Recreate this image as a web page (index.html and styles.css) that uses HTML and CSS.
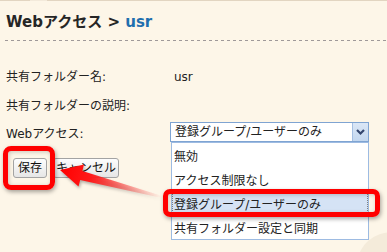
FILE: index.html
```html
<!DOCTYPE html>
<html lang="ja">
<head>
<meta charset="utf-8">
<title>Webアクセス</title>
<link rel="stylesheet" href="styles.css">
</head>
<body>
<div class="page">
  <div class="topbar"></div>
  <h1 class="title">Webアクセス <span class="gt">&gt;</span> <span class="share">usr</span></h1>
  <div class="rule"></div>
  <div class="form">
    <div class="label">共有フォルダー名:</div>
    <div class="value">usr</div>
    <div class="label">共有フォルダーの説明:</div>
    <div class="value"></div>
    <div class="label label-web">Webアクセス:</div>
    <div class="field">
      <div class="select">
        <span class="sel-text">登録グループ/ユーザーのみ</span>
        <span class="sel-btn"><svg width="15" height="18" viewBox="0 0 15 18"><path d="M4 7 L7.5 10.5 L11 7" fill="none" stroke="#34466e" stroke-width="2.2"/></svg></span>
      </div>
      <ul class="options">
        <li class="option">無効</li>
        <li class="option">アクセス制限なし</li>
        <li class="option option-active">登録グループ/ユーザーのみ</li>
        <li class="option">共有フォルダー設定と同期</li>
      </ul>
    </div>
  </div>
  <div class="buttons">
    <button class="btn btn-save">保存</button>
    <button class="btn btn-cancel">キャンセル</button>
  </div>
  <div class="curl"></div>
  <svg class="arrow" width="387" height="252" viewBox="0 0 387 252">
    <defs>
      <linearGradient id="fade" gradientUnits="userSpaceOnUse" x1="60" y1="170" x2="162" y2="197">
        <stop offset="0" stop-color="#ff0000" stop-opacity="1"/>
        <stop offset="0.3" stop-color="#ff1a1a" stop-opacity="1"/>
        <stop offset="1" stop-color="#ff4040" stop-opacity="0"/>
      </linearGradient>
    </defs>
    <polygon class="arrow-shape" points="60,170 84,164.5 82.4,171 162.3,196 161.7,198 80.2,180 78.5,186.5" fill="url(#fade)"/>
  </svg>
  <div class="mark mark-save"></div>
  <div class="mark mark-option"></div>
</div>
</body>
</html>
```
FILE: styles.css
```css
html, body {
  margin: 0;
  padding: 0;
}

body {
  background: #fdf6e8;
  font-family: "DejaVu Sans", "Noto Sans CJK JP", sans-serif;
  font-size: 12px;
  color: #222;
}

.page {
  position: relative;
  width: 387px;
  height: 252px;
  overflow: hidden;
}

.topbar {
  height: 1px;
  background: linear-gradient(to right, #e2d5c1 30px, #f3eadb 30px, #f3eadb 47px, #e2d5c1 47px);
  margin-bottom: 1px;
}

.title {
  margin: 0;
  padding: 10px 0 0 6px;
  font-size: 15px;
  line-height: 20px;
  font-weight: bold;
  color: #262626;
}

.share {
  color: #1f6fae;
}

.rule {
  margin: 8px 0 0 5px;
  height: 1px;
  background: repeating-linear-gradient(to right, #9f9999 0, #9f9999 3px, transparent 3px, transparent 6px);
}

.form {
  margin-top: 21px;
  padding-left: 6px;
  display: grid;
  grid-template-columns: 164px 199px;
  grid-template-rows: 29px 29px 24px;
  align-items: center;
}

.label {
  line-height: 16px;
  white-space: nowrap;
}

.label-web {
  margin-top: 4px;
}

.value {
  padding-left: 4px;
  line-height: 16px;
}

.field {
  position: relative;
}

.select {
  display: flex;
  height: 18px;
  border: 1px solid #7fa4d2;
  background: #fff;
}

.sel-text {
  flex: 1;
  padding-left: 4px;
  line-height: 18px;
  white-space: nowrap;
}

.sel-btn {
  width: 15px;
  height: 18px;
  border-left: 1px solid #a4bfe2;
  background: linear-gradient(#dbe7f6, #c3d7ef);
}

.sel-btn svg {
  display: block;
}

.options {
  position: absolute;
  top: 20px;
  left: 1px;
  width: 196px;
  margin: 0;
  padding: 0;
  list-style: none;
  background: #fff;
  border: 1px solid #9dbbe2;
}

.option {
  height: 20px;
  padding: 4px 0 0 2px;
  line-height: 20px;
  white-space: nowrap;
}

.option-active {
  background: #d5e3f5;
  outline: 1px dotted #808080;
  outline-offset: -1px;
}

.buttons {
  display: flex;
  gap: 6px;
  margin-top: 14px;
  padding-left: 13px;
}

.btn {
  height: 20px;
  margin: 0;
  border: 1px solid #a3a3a3;
  border-radius: 3px;
  background: linear-gradient(#fdfdfd, #e6e6e6);
  font-family: "DejaVu Sans", "Noto Sans CJK JP", sans-serif;
  font-size: 12px;
  line-height: 18px;
  color: #111;
  padding: 0;
}

.btn-save {
  width: 34px;
}

.btn-cancel {
  width: 66px;
}

.curl {
  position: absolute;
  left: 358px;
  top: 232px;
  width: 70px;
  height: 60px;
  border-radius: 50%;
  background: #f4ebda;
}

.arrow {
  position: absolute;
  left: 0;
  top: 0;
  pointer-events: none;
}

.arrow-shape {
  filter: drop-shadow(1px 2px 1.5px rgba(0, 0, 0, 0.3));
}

.mark {
  position: absolute;
  border: 5px solid #ff0000;
  box-shadow: 1px 2px 4px rgba(0, 0, 0, 0.35), inset 1px 1px 4px rgba(0, 0, 0, 0.2);
  pointer-events: none;
}

.mark-save {
  left: 3px;
  top: 146px;
  width: 42px;
  height: 34px;
  border-radius: 8px;
}

.mark-option {
  left: 163px;
  top: 189px;
  width: 207px;
  height: 18px;
  border-radius: 7px;
}
```
